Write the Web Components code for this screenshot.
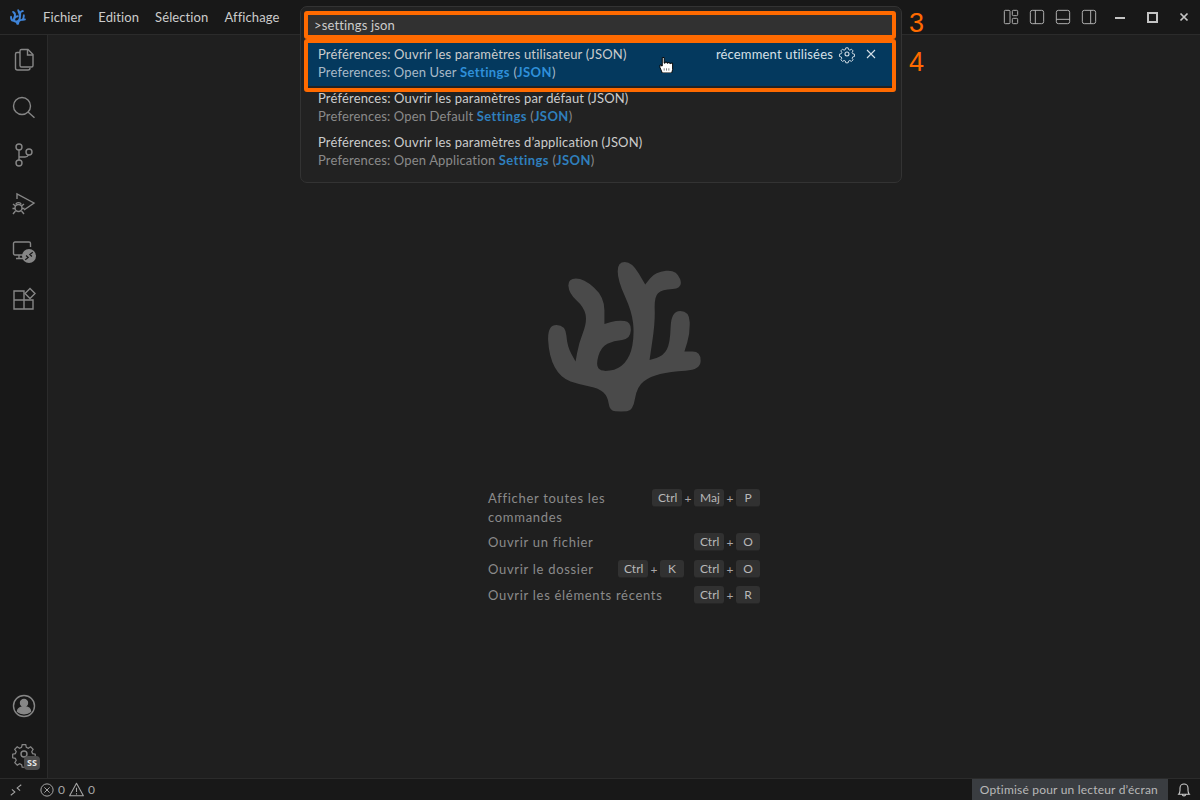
<!DOCTYPE html>
<html lang="fr">
<head>
<meta charset="utf-8">
<title>VSCodium</title>
<style>
  html, body { margin: 0; height: 100%; background: #1f1f1f; overflow: hidden; }
  body { font-family: Lato, "Noto Sans", sans-serif; }
</style>
</head>
<body>
<vs-app></vs-app>
<script>
const ICONS = {
  files: '<path d="M9.500 2.500h6.500l5 5v11a1.500 1.500 0 0 1-1.500 1.500h-10A1.500 1.500 0 0 1 8 18.500V4a1.500 1.500 0 0 1 1.500-1.500z"/><path d="M15.500 2.500v5.500h5.500"/><path d="M8 5.500H5a1.500 1.500 0 0 0-1.500 1.500v14A2 2 0 0 0 5.500 23H16a2 2 0 0 0 2-2"/>',
  search: '<circle cx="10" cy="11" r="8.500"/><path d="M16 17l6.500 5.800"/>',
  git: '<circle cx="7" cy="4" r="3"/><circle cx="7" cy="20" r="3"/><circle cx="17" cy="9" r="3"/><path d="M7 7v10M7 14h6c2 0 3-1 3.500-2"/>',
  debug: '<path d="M5 8V3l17 9-10 7"/><circle cx="6.500" cy="17" r="3.500"/><path d="M4 13.500c0-2.500 5-2.500 5 0M1 13l2.500 2M12 13l-2.500 2M.5 17.500h2.500M10 17.500h2.500M1 23l2.500-3M12 23l-2.500-3"/>',
  remote: '<path d="M11 16H3a1.500 1.500 0 0 1-1.500-1.500v-10A1.500 1.500 0 0 1 3 3h14a1.500 1.500 0 0 1 1.500 1.500V8"/><path d="M7 16v3M4 19.500h7"/>',
  extensions: '<path d="M2 4h10v18H2zM2 13h19v9H12M12 13V4"/><path d="M18 1.500l5 5-5 5-5-5z"/>',
  account: '<circle cx="12" cy="12" r="10.500"/><circle cx="12" cy="9" r="3.500" fill="currentColor"/><path d="M5.500 17.500c0-3 3-4.500 6.500-4.500s6.500 1.500 6.500 4.500c-3.500 3-9.500 3-13 0z" fill="currentColor"/>',
  gear: '<path d="M10 1.500h4l.7 3 2.200 1 2.700-1.600 2.800 2.800-1.600 2.700 1 2.200 3 .7v4l-3 .7-1 2.200 1.600 2.700-2.800 2.800-2.700-1.600-2.200 1-.7 3h-4l-.7-3-2.200-1-2.700 1.600-2.800-2.800 1.600-2.700-1-2.200-3-.7v-4l3-.7 1-2.200L1.500 6.700l2.800-2.800L7 5.500l2.200-1z" transform="translate(1.400 1.400) scale(.88)"/><circle cx="12" cy="12" r="3"/>',
  close: '<path d="M6 6l12 12M18 6L6 18"/>',
  layoutCustom: '<rect x="2" y="2" width="8.500" height="20" rx="1.500"/><rect x="14" y="2" width="8" height="8" rx="1.500"/><rect x="14" y="14" width="8" height="8" rx="1.500"/>',
  sidebarLeft: '<rect x="2" y="2" width="20" height="20" rx="3"/><path d="M9.500 2v20"/>',
  panel: '<rect x="2" y="2" width="20" height="20" rx="3"/><path d="M2 15.500h20"/>',
  sidebarRight: '<rect x="2" y="2" width="20" height="20" rx="3"/><path d="M14.500 2v20"/>',
  remoteStatus: '<path d="M3 21l7-5.500-5-4.500M21 3l-7 5.500 5 4.500"/>',
  error: '<circle cx="12" cy="12" r="10.500"/><path d="M7.500 7.500l9 9M16.500 7.500l-9 9"/>',
  warning: '<path d="M12 2L23 22H1z" stroke-linejoin="round"/><path d="M12 9v7M12 18v2"/>',
  bell: '<path d="M4 18.500c1.500-1.500 2-3 2-6V9a6 6 0 0 1 12 0v3.500c0 3 .5 4.500 2 6z"/><path d="M9.500 18.500a2.500 2.500 0 0 0 5 0"/>'
};

class VsIcon extends HTMLElement {
  connectedCallback() {
    const size = this.getAttribute('size') || 16;
    const weight = this.getAttribute('weight') || 1.4;
    this.attachShadow({ mode: 'open' }).innerHTML = `
      <style>
        :host { display: inline-flex; width: ${size}px; height: ${size}px; color: inherit; flex: none; }
        svg { width: 100%; height: 100%; display: block; fill: none; stroke: currentColor; stroke-width: ${weight}; overflow: visible; }
      </style>
      <svg viewBox="0 0 24 24">${ICONS[this.getAttribute('name')] || ''}</svg>`;
  }
}
customElements.define('vs-icon', VsIcon);

// outline traced from the watermark; 3rd value marks a sharp notch, the rest get smoothed
const LOGO_POINTS = [
  [272,486],[238,484],[232,440],[205,415],[150,405],[90,385],[55,320],[50,225],[105,225],[110,290],
  [135,335,1],[145,280],[170,215],[160,170],[115,130],[112,85],[160,85],[222,140],[222,222,1],
  [262,210],[303,215],[300,268],[250,272],[212,290],[196,345],[212,366],[265,358],[300,320],[312,255],
  [305,185],[262,90],[262,35],[305,35],[345,103,1],[375,65],[440,58],[460,115],[395,118],[372,140],
  [375,215],[358,330,1],[400,318],[420,280],[423,183],[478,183],[480,250],[463,305,1],[512,305],
  [512,360],[420,365],[360,380],[320,410],[308,484]
];

function logoPath(pts) {
  const mid = (a, b) => `${(a[0] + b[0]) / 2} ${(a[1] + b[1]) / 2}`;
  let d = `M${mid(pts[pts.length - 1], pts[0])}`;
  pts.forEach((p, i) => {
    const next = pts[(i + 1) % pts.length];
    if (p[2]) d += `L${p[0]} ${p[1]}L${mid(p, next)}`;
    else d += `Q${p[0]} ${p[1]} ${mid(p, next)}`;
  });
  return d + 'Z';
}

class VsLogo extends HTMLElement {
  connectedCallback() {
    this.attachShadow({ mode: 'open' }).innerHTML = `
      <style>
        :host { display: block; color: #4a4a4a; line-height: 0; }
        svg { width: 100%; height: 100%; }
      </style>
      <svg viewBox="50 35 465 452"><path fill="currentColor" d="${logoPath(LOGO_POINTS)}"/></svg>`;
  }
}
customElements.define('vs-logo', VsLogo);

class VsTitlebar extends HTMLElement {
  connectedCallback() {
    const menus = ['Fichier', 'Edition', 'Sélection', 'Affichage'];
    this.attachShadow({ mode: 'open' }).innerHTML = `
      <style>
        :host { display: flex; align-items: center; height: 34px; background: #181818; border-bottom: 1px solid #2b2b2b; color: #cccccc; font-size: 13px; }
        vs-logo { width: 16px; height: 16px; margin: 0 9px 0 10px; color: #3f84d8; }
        .menu { padding: 0 8px; line-height: 34px; letter-spacing: .1px; }
        .spacer { flex: 1; }
        .layout { display: flex; gap: 10px; margin-right: 7px; color: #b8b8b8; }
        .win { width: 32px; display: flex; justify-content: center; align-items: center; }
        .min { width: 10px; height: 2px; background: #c4c4c4; margin-top: 2px; }
        .max { width: 7px; height: 7px; border: 2px solid #c4c4c4; }
        .wins { display: flex; margin-right: 0; color: #c4c4c4; }
      </style>
      <vs-logo></vs-logo>
      ${menus.map(m => `<span class="menu">${m}</span>`).join('')}
      <span class="spacer"></span>
      <div class="layout">
        <vs-icon name="layoutCustom"></vs-icon>
        <vs-icon name="sidebarLeft"></vs-icon>
        <vs-icon name="panel"></vs-icon>
        <vs-icon name="sidebarRight"></vs-icon>
      </div>
      <div class="wins">
        <span class="win"><span class="min"></span></span>
        <span class="win"><span class="max"></span></span>
        <span class="win"><vs-icon name="close" size="14" weight="3"></vs-icon></span>
      </div>`;
  }
}
customElements.define('vs-titlebar', VsTitlebar);

class VsActivitybar extends HTMLElement {
  connectedCallback() {
    const top = ['files', 'search', 'git', 'debug', 'remote', 'extensions'];
    this.attachShadow({ mode: 'open' }).innerHTML = `
      <style>
        :host { display: flex; flex-direction: column; justify-content: space-between; width: 47px; background: #181818; border-right: 1px solid #2b2b2b; color: #868686; }
        .item { position: relative; height: 48px; display: flex; align-items: center; justify-content: center; }
        .off { position: absolute; left: 22px; top: 22px; width: 14px; height: 14px; border-radius: 50%; background: #868686; color: #181818; display: flex; align-items: center; justify-content: center; }
        .badge { position: absolute; left: 24px; top: 26px; width: 16px; height: 14px; border-radius: 4px; background: #4d4d4d; color: #e6e6e6; font: bold 9px/14px "Noto Sans", sans-serif; text-align: center; }
      </style>
      <div>
        ${top.map(n => `<div class="item"><vs-icon name="${n}" size="24"></vs-icon>${n === 'remote' ? '<span class="off"><vs-icon name="remoteStatus" size="10" weight="3"></vs-icon></span>' : ''}</div>`).join('')}
      </div>
      <div>
        <div class="item"><vs-icon name="account" size="24"></vs-icon></div>
        <div class="item"><vs-icon name="gear" size="24"></vs-icon><span class="badge">SS</span></div>
      </div>`;
  }
}
customElements.define('vs-activitybar', VsActivitybar);

class VsKbd extends HTMLElement {
  constructor() {
    super();
    this.attachShadow({ mode: 'open' }).innerHTML = `
      <style>
        :host { display: inline-block; min-width: 12px; height: 17px; padding: 0 6px; background: #313131; border-bottom: 1px solid #262626; border-radius: 3px; color: #b8b8b8; font-size: 12px; line-height: 17px; text-align: center; }
        :host([long]) { width: 18px; }
      </style>
      <slot></slot>`;
  }
}
customElements.define('vs-kbd', VsKbd);

class VsShortcut extends HTMLElement {
  connectedCallback() {
    const chords = this.getAttribute('keys').split(' ').map(c =>
      `<span class="chord">${c.split('+').map(k => `<vs-kbd ${k.length > 1 ? 'long' : ''}>${k}</vs-kbd>`).join('<span class="plus">+</span>')}</span>`).join('');
    this.attachShadow({ mode: 'open' }).innerHTML = `
      <style>
        :host { display: grid; grid-template-columns: 1fr auto; column-gap: 8px; min-height: 19px; align-items: start; }
        .label { color: #8b8b8b; font-size: 13px; line-height: 18.500px; letter-spacing: .7px; max-width: 150px; }
        .label.wide { max-width: none; white-space: nowrap; }
        .keys { display: flex; gap: 10px; justify-content: flex-end; }
        .chord { display: flex; align-items: flex-start; }
        .plus { width: 12px; text-align: center; color: #a8a8a8; font-size: 12px; line-height: 19px; }
      </style>
      <div class="label ${this.hasAttribute('wide') ? 'wide' : ''}"><slot></slot></div>
      <div class="keys">${chords}</div>`;
  }
}
customElements.define('vs-shortcut', VsShortcut);

class VsWatermark extends HTMLElement {
  connectedCallback() {
    this.attachShadow({ mode: 'open' }).innerHTML = `
      <style>
        :host { display: flex; flex-direction: column; align-items: center; flex: 1; padding-top: 227px; background: #1f1f1f; }
        vs-logo { width: 155px; height: 150px; }
        .list { display: flex; flex-direction: column; gap: 7.400px; width: 272px; margin-top: 77px; }
      </style>
      <vs-logo></vs-logo>
      <div class="list">
        <vs-shortcut keys="Ctrl+Maj+P">Afficher toutes les commandes</vs-shortcut>
        <vs-shortcut keys="Ctrl+O" wide>Ouvrir un fichier</vs-shortcut>
        <vs-shortcut keys="Ctrl+K Ctrl+O" wide>Ouvrir le dossier</vs-shortcut>
        <vs-shortcut keys="Ctrl+R" wide>Ouvrir les éléments récents</vs-shortcut>
      </div>`;
  }
}
customElements.define('vs-watermark', VsWatermark);

class VsStatusbar extends HTMLElement {
  connectedCallback() {
    this.attachShadow({ mode: 'open' }).innerHTML = `
      <style>
        :host { display: flex; align-items: center; height: 21px; background: #181818; border-top: 1px solid #2b2b2b; color: #a6a6a6; font-size: 12px; }
        .remote { width: 14px; margin: 0 17px 0 9px; display: flex; }
        .problems { display: flex; align-items: center; gap: 4px; }
        .spacer { flex: 1; }
        .sr { height: 21px; line-height: 21px; padding: 0 10px 0 8px; background: #3a3d41; color: #b8b8b8; letter-spacing: .2px; }
        .bell { width: 32px; display: flex; justify-content: center; color: #cfcfcf; }
      </style>
      <span class="remote"><vs-icon name="remoteStatus" size="14" weight="1.800"></vs-icon></span>
      <span class="problems">
        <vs-icon name="error" size="14" weight="1.700"></vs-icon>0
        <vs-icon name="warning" size="15" weight="1.700"></vs-icon>0
      </span>
      <span class="spacer"></span>
      <span class="sr">Optimisé pour un lecteur d’écran</span>
      <span class="bell"><vs-icon name="bell" size="16" weight="1.600"></vs-icon></span>`;
  }
}
customElements.define('vs-statusbar', VsStatusbar);

class VsPickRow extends HTMLElement {
  connectedCallback() {
    const selected = this.hasAttribute('selected');
    this.attachShadow({ mode: 'open' }).innerHTML = `
      <style>
        :host { display: flex; height: 44px; padding: 0 14px 0 11px; box-sizing: border-box; font-size: 13px; line-height: 18px; letter-spacing: .17px; color: #cccccc; background: ${selected ? '#04395e' : 'transparent'}; }
        .text { flex: 1; white-space: nowrap; padding-top: 3px; }
        .desc { color: ${selected ? '#a9bac8' : '#8a8a8a'}; letter-spacing: .15px; }
        .side { display: flex; align-items: center; height: 24px; color: #d6e0e8; gap: 6px; }
      </style>
      <div class="text">
        <div><slot></slot></div>
        <div class="desc"><slot name="desc"></slot></div>
      </div>
      ${selected ? `<div class="side"><span>récemment utilisées</span><vs-icon name="gear" size="16" weight="1.600"></vs-icon><vs-icon style="margin-left:2px" name="close" size="16" weight="1.600"></vs-icon></div>` : ''}`;
  }
}
customElements.define('vs-pick-row', VsPickRow);

class VsQuickPick extends HTMLElement {
  connectedCallback() {
    this.attachShadow({ mode: 'open' }).innerHTML = `
      <style>
        :host { position: absolute; left: 300px; top: 6px; width: 600px; height: 175px; background: #222222; border: 1px solid #333333; border-radius: 7px; z-index: 2; }
        .input { margin: 8px 8px 0 6px; height: 20px; background: #313131; color: #cccccc; font-size: 13px; line-height: 20px; padding-left: 7px; letter-spacing: .15px; }
        .rows { margin: 7px 8px 0 6px; }
        b { color: #2f7fbd; letter-spacing: .4px; }
        .sel b { color: #2f90da; }
      </style>
      <div class="input">&gt;settings json</div>
      <div class="rows">
        <vs-pick-row selected class="sel">Préférences: Ouvrir les paramètres utilisateur (JSON)<span slot="desc">Preferences: Open User <b>Settings</b> (<b>JSON</b>)</span></vs-pick-row>
        <vs-pick-row>Préférences: Ouvrir les paramètres par défaut (JSON)<span slot="desc">Preferences: Open Default <b>Settings</b> (<b>JSON</b>)</span></vs-pick-row>
        <vs-pick-row>Préférences: Ouvrir les paramètres d’application (JSON)<span slot="desc">Preferences: Open Application <b>Settings</b> (<b>JSON</b>)</span></vs-pick-row>
      </div>`;
  }
}
customElements.define('vs-quick-pick', VsQuickPick);

// annotation rectangle + its number, over the screenshot
class VsCallout extends HTMLElement {
  connectedCallback() {
    const [x, y, w, h] = this.getAttribute('box').split(',').map(Number);
    const numTop = this.getAttribute('num-top');
    this.attachShadow({ mode: 'open' }).innerHTML = `
      <style>
        :host { position: absolute; left: ${x}px; top: ${y}px; width: ${w}px; height: ${h}px; box-sizing: border-box; border: 4px solid #ff6a00; border-radius: 3px; z-index: 3; }
        span { position: absolute; left: ${w + 9}px; top: ${numTop}px; color: #ff6a00; font: 27px/30px "Liberation Sans", sans-serif; }
      </style>
      <span>${this.getAttribute('num')}</span>`;
  }
}
customElements.define('vs-callout', VsCallout);

class VsCursor extends HTMLElement {
  connectedCallback() {
    this.attachShadow({ mode: 'open' }).innerHTML = `
      <style>
        :host { position: absolute; left: 659px; top: 57px; width: 15px; height: 16px; z-index: 4; line-height: 0; }
      </style>
      <svg width="15" height="16" viewBox="0 0 16 17">
        <path d="M3.500.5h2v6h1v-1h2v1h1v-.5h2v1h1v-.5h2v7l-1 3.500H3.500L1 11V8.500h1.500v1h1z" fill="#fff" stroke="#000"/>
        <path d="M5.500 12v2.500M8 12v2.500M10.500 12v2.500" stroke="#777"/>
      </svg>`;
  }
}
customElements.define('vs-cursor', VsCursor);

class VsApp extends HTMLElement {
  connectedCallback() {
    this.attachShadow({ mode: 'open' }).innerHTML = `
      <style>
        :host { display: flex; flex-direction: column; position: relative; width: 1200px; height: 800px; overflow: hidden; }
        .main { display: flex; flex: 1; min-height: 0; }
      </style>
      <vs-titlebar></vs-titlebar>
      <div class="main">
        <vs-activitybar></vs-activitybar>
        <vs-watermark></vs-watermark>
      </div>
      <vs-statusbar></vs-statusbar>
      <vs-quick-pick></vs-quick-pick>
      <vs-callout box="304,11,592,28" num="3" num-top="-7"></vs-callout>
      <vs-callout box="304,39,592,53" num="4" num-top="4"></vs-callout>
      <vs-cursor></vs-cursor>`;
  }
}
customElements.define('vs-app', VsApp);
</script>
</body>
</html>
